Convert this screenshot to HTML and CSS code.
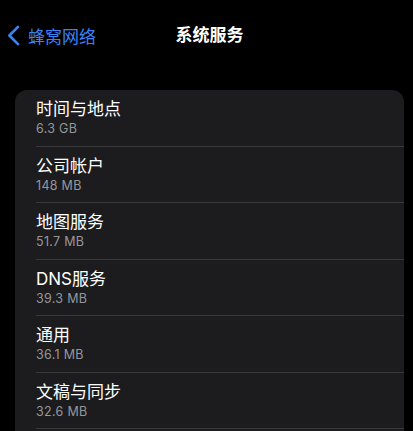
FILE: index.html
```html
<!DOCTYPE html>
<html lang="zh-CN">
<head>
    <meta charset="UTF-8">
    <meta name="viewport" content="width=device-width, initial-scale=1.0">
    <title>系统服务</title>
    <link rel="stylesheet" href="styles.css">
</head>
<body>
    <div class="nav-bar">
        <a class="back-link" href="#">
            <svg class="chevron" width="13" height="21" viewBox="0 0 13 21">
                <path d="M11 1.8 L2.4 10.5 L11 19.2" fill="none" stroke="currentColor" stroke-width="2.6" stroke-linecap="round" stroke-linejoin="round"/>
            </svg>
            <span>蜂窝网络</span>
        </a>
        <h1 class="nav-title">系统服务</h1>
    </div>

    <div class="list-card">
        <div class="list-row">
            <div class="row-title">时间与地点</div>
            <div class="row-size">6.3 GB</div>
        </div>
        <div class="list-row">
            <div class="row-title">公司帐户</div>
            <div class="row-size">148 MB</div>
        </div>
        <div class="list-row">
            <div class="row-title">地图服务</div>
            <div class="row-size">51.7 MB</div>
        </div>
        <div class="list-row">
            <div class="row-title">DNS服务</div>
            <div class="row-size">39.3 MB</div>
        </div>
        <div class="list-row">
            <div class="row-title">通用</div>
            <div class="row-size">36.1 MB</div>
        </div>
        <div class="list-row">
            <div class="row-title">文稿与同步</div>
            <div class="row-size">32.6 MB</div>
        </div>
    </div>
</body>
</html>
```

FILE: styles.css
```css
* {
    margin: 0;
    padding: 0;
    box-sizing: border-box;
}

body {
    background: #000;
    color: #fff;
    font-family: Inter, "Noto Sans CJK SC", sans-serif;
    height: 431px;
    overflow: hidden;
}

.nav-bar {
    position: relative;
    height: 90px;
    padding-top: 24px;
}

.back-link {
    display: flex;
    align-items: center;
    gap: 8px;
    padding-left: 7px;
    height: 22px;
    color: #3a82f6;
    text-decoration: none;
    font-size: 17px;
}

.chevron {
    display: block;
}

.nav-title {
    position: absolute;
    top: 24px;
    left: 0;
    right: 0;
    padding-left: 6px;
    text-align: center;
    font-size: 17px;
    line-height: 22px;
    font-weight: 600;
}

.list-card {
    margin: 0 9px 0 15px;
    background: #1c1c1e;
    border-radius: 12px;
    padding-left: 21px;
    min-height: 360px;
}

.list-row {
    padding: 9px 0 8.5px;
    border-bottom: 1px solid #38383a;
}

.row-title {
    font-size: 17px;
    line-height: 21px;
}

.row-size {
    font-size: 12.5px;
    line-height: 16px;
    letter-spacing: 0.3px;
    color: #96969b;
    padding-top: 1px;
}
```
